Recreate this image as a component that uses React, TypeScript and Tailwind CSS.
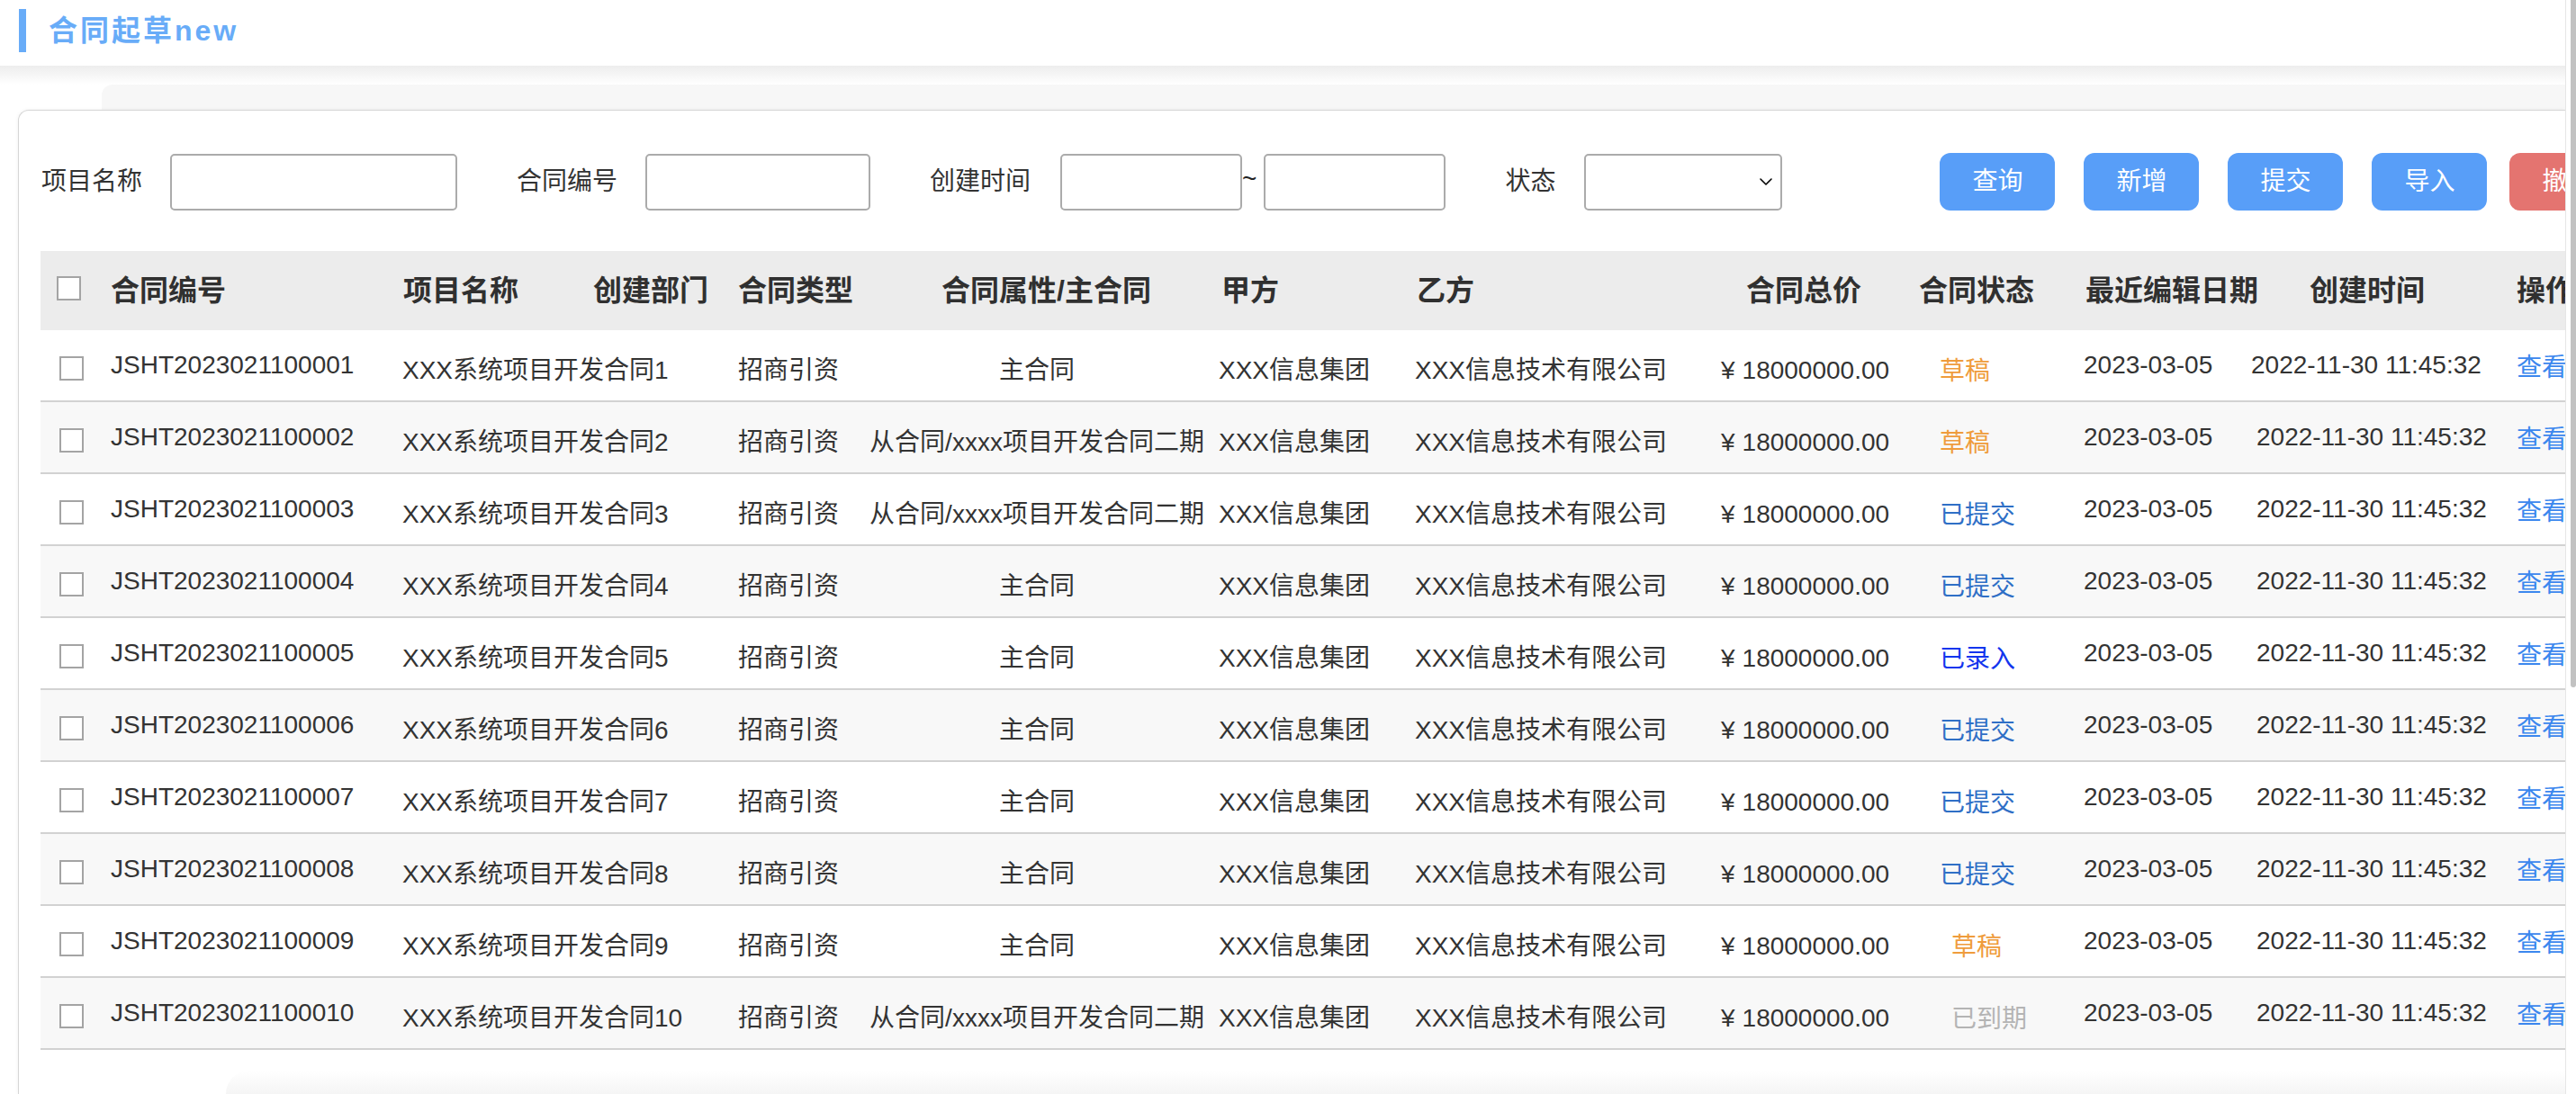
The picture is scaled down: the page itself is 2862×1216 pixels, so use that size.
import { ChevronDown } from 'lucide-react';
import { clsx } from 'clsx';

type Row = {
  id: string;
  name: string;
  attr: string;
  status: string;
  statusClass: string;
  statusShift?: boolean;
  timeShift?: boolean;
};

const MAIN = '主合同';
const SUB = '从合同/xxxx项目开发合同二期';

const statusColor: Record<string, string> = {
  草稿: 'text-[#ef9c3c]',
  已提交: 'text-[#2f6fc6]',
  已录入: 'text-[#1235ee]',
  已到期: 'text-[#b4b4b4]',
};

const rows: Row[] = [
  { id: 'JSHT2023021100001', name: 'XXX系统项目开发合同1', attr: MAIN, status: '草稿', statusClass: statusColor['草稿'] },
  { id: 'JSHT2023021100002', name: 'XXX系统项目开发合同2', attr: SUB, status: '草稿', statusClass: statusColor['草稿'], timeShift: true },
  { id: 'JSHT2023021100003', name: 'XXX系统项目开发合同3', attr: SUB, status: '已提交', statusClass: statusColor['已提交'], timeShift: true },
  { id: 'JSHT2023021100004', name: 'XXX系统项目开发合同4', attr: MAIN, status: '已提交', statusClass: statusColor['已提交'], timeShift: true },
  { id: 'JSHT2023021100005', name: 'XXX系统项目开发合同5', attr: MAIN, status: '已录入', statusClass: statusColor['已录入'], timeShift: true },
  { id: 'JSHT2023021100006', name: 'XXX系统项目开发合同6', attr: MAIN, status: '已提交', statusClass: statusColor['已提交'], timeShift: true },
  { id: 'JSHT2023021100007', name: 'XXX系统项目开发合同7', attr: MAIN, status: '已提交', statusClass: statusColor['已提交'], timeShift: true },
  { id: 'JSHT2023021100008', name: 'XXX系统项目开发合同8', attr: MAIN, status: '已提交', statusClass: statusColor['已提交'], timeShift: true },
  { id: 'JSHT2023021100009', name: 'XXX系统项目开发合同9', attr: MAIN, status: '草稿', statusClass: statusColor['草稿'], statusShift: true, timeShift: true },
  { id: 'JSHT2023021100010', name: 'XXX系统项目开发合同10', attr: SUB, status: '已到期', statusClass: statusColor['已到期'], statusShift: true, timeShift: true },
];

const FONT = 'font-["Liberation_Sans","Noto_Sans_CJK_SC",sans-serif]';

function Box({ className }: { className?: string }) {
  return <div className={clsx('w-[27px] h-[27px] border-2 border-[#a4a4a4] bg-white shrink-0', className)} />;
}

function Input({ width }: { width: string }) {
  return <div className={clsx('h-[63px] border-2 border-[#ababab] rounded-[5px] bg-white shrink-0', width)} />;
}

function Btn({ label, red, className }: { label: string; red?: boolean; className?: string }) {
  return (
    <button
      className={clsx(
        'w-[128px] h-[64px] rounded-[12px] text-white text-[28px] shrink-0 flex items-center justify-center',
        red ? 'bg-[#e47470]' : 'bg-[#589ef8]',
        className,
      )}
    >
      {label}
    </button>
  );
}

const headers: [string, string][] = [
  ['合同编号', 'w-[325px]'],
  ['项目名称', 'w-[211px]'],
  ['创建部门', 'w-[161px]'],
  ['合同类型', 'w-[226px]'],
  ['合同属性/主合同', 'w-[311px]'],
  ['甲方', 'w-[217px]'],
  ['乙方', 'w-[366px]'],
  ['合同总价', 'w-[192px]'],
  ['合同状态', 'w-[185px]'],
  ['最近编辑日期', 'w-[249px]'],
  ['创建时间', 'w-[230px]'],
  ['操作', 'w-[120px]'],
];

export default function App() {
  return (
    <div className={clsx('w-[2862px] h-[1216px] flex bg-white overflow-hidden text-[#333]', FONT)}>
      <div className="w-[2850px] shrink-0 flex flex-col overflow-hidden">
        {/* page title */}
        <div className="h-[73px] shrink-0 flex items-start">
          <div className="mt-[10px] h-[48px] flex items-center">
            <div className="ml-[21px] w-[8px] h-[48px] bg-[#68acf8]" />
            <h1 className="ml-[25px] text-[32px] font-bold tracking-[3px] text-[#68acf8] leading-none whitespace-nowrap">
              合同起草new
            </h1>
          </div>
        </div>
        <div className="h-[21px] shrink-0 bg-linear-to-b from-[#ededed] to-white" />
        <div className="h-[28px] shrink-0 ml-[113px] bg-[#f7f7f7] rounded-tl-[12px]" />

        {/* main card */}
        <div className="flex-1 ml-[20px] border-l border-t border-[#d6d6d6] rounded-tl-[12px] bg-white overflow-hidden shadow-[0_0_4px_rgba(0,0,0,0.06)] flex flex-col">
          {/* filters */}
          <div className="mt-[47px] pl-[25px] flex items-center w-max text-[28px] whitespace-nowrap">
            <span>项目名称</span>
            <div className="ml-[31px]"><Input width="w-[319px]" /></div>
            <span className="ml-[66px]">合同编号</span>
            <div className="ml-[31px]"><Input width="w-[250px]" /></div>
            <span className="ml-[66px]">创建时间</span>
            <div className="ml-[33px]"><Input width="w-[202px]" /></div>
            <span className="text-[#222] -mt-[6px]">~</span>
            <div className="ml-[8px]"><Input width="w-[202px]" /></div>
            <span className="ml-[66px]">状态</span>
            <div className="ml-[32px] w-[220px] h-[63px] border-2 border-[#ababab] rounded-[5px] bg-white flex items-center justify-end pr-[4px] shrink-0">
              <ChevronDown className="w-[24px] h-[24px] text-black" strokeWidth={1.6} />
            </div>
            <Btn label="查询" className="ml-[175px]" />
            <Btn label="新增" className="ml-[32px]" />
            <Btn label="提交" className="ml-[32px]" />
            <Btn label="导入" className="ml-[32px]" />
            <Btn label="撤销" red className="ml-[25px]" />
          </div>

          {/* table */}
          <div className="mt-[45px] pl-[24px] w-max">
            <div className="h-[88px] bg-[#ececec] flex items-center text-[32px] font-bold text-[#303030] whitespace-nowrap">
              <div className="w-[78px] shrink-0 pl-[18px] -mt-[5px]">
                <Box />
              </div>
              {headers.map(([label, w]) => (
                <div key={label} className={clsx('shrink-0', w)}>
                  {label}
                </div>
              ))}
            </div>

            {rows.map((r, i) => (
              <div
                key={r.id}
                className={clsx(
                  'h-[80px] border-b-2 border-[#d2d2d2] flex items-center text-[28px] whitespace-nowrap',
                  i % 2 === 1 ? 'bg-[#f8f8f8]' : 'bg-white',
                )}
              >
                <div className="w-[78px] shrink-0 pl-[21px] pt-[6px]">
                  <Box />
                </div>
                <div className="w-[324px] shrink-0">{r.id}</div>
                <div className="w-[373px] shrink-0 pt-[12px]">{r.name}</div>
                <div className="w-[130px] shrink-0 pt-[12px]">招商引资</div>
                <div className="w-[404px] shrink-0 pt-[12px] text-center">{r.attr}</div>
                <div className="w-[218px] shrink-0 pt-[12px]">XXX信息集团</div>
                <div className="w-[340px] shrink-0 pt-[12px]">XXX信息技术有限公司</div>
                <div className="w-[243px] shrink-0 pt-[12px]">
                  <span className="mr-[8px]">¥</span>18000000.00
                </div>
                <div className={clsx('w-[160px] shrink-0 pt-[14px]', r.statusShift && 'pl-[13px]', r.statusClass)}>
                  {r.status}
                </div>
                <div className="w-[186px] shrink-0">2023-03-05</div>
                <div className={clsx('w-[295px] shrink-0', r.timeShift && 'pl-[6px]')}>2022-11-30 11:45:32</div>
                <div className="w-[120px] shrink-0 pt-[6px] text-[#3b87ee]">查看</div>
              </div>
            ))}
          </div>

          <div className="flex-1" />
          <div className="h-[26px] ml-[230px] rounded-tl-[60px] bg-linear-to-b from-white to-[#f5f5f5]" />
        </div>
      </div>

      {/* scrollbar */}
      <div className="w-[12px] shrink-0 border-l border-[#e6e6e6] bg-white flex justify-end">
        <div className="w-[6px] h-[764px] bg-[#c2c2c2] rounded-b-full" />
      </div>
    </div>
  );
}
